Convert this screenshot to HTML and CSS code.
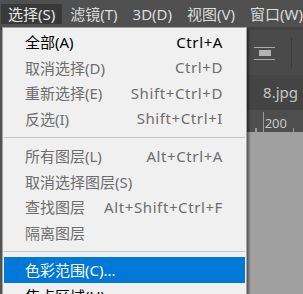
FILE: index.html
```html
<!DOCTYPE html>
<html lang="zh-CN">
<head>
    <meta charset="UTF-8">
    <meta name="viewport" content="width=device-width, initial-scale=1.0">
    <title>选择菜单</title>
    <link rel="stylesheet" href="styles.css">
</head>
<body>
    <div class="app">
        <nav class="menubar">
            <span class="open">选择(S)</span>
            <span>滤镜(T)</span>
            <span>3D(D)</span>
            <span>视图(V)</span>
            <span>窗口(W)</span>
        </nav>

        <div class="workspace">
            <div class="toolbox"></div>
            <div class="main">
                <div class="options">
                    <svg class="align-icon" width="21" height="13" viewBox="0 0 21 13">
                        <rect x="0" y="0" width="21" height="1" fill="#a9a9a9"/>
                        <rect x="5" y="3" width="12" height="6" fill="#b3b3b3"/>
                        <rect x="0" y="12" width="21" height="1" fill="#a9a9a9"/>
                    </svg>
                    <div class="divider"></div>
                </div>
                <div class="tabs">
                    <span class="tab">8.jpg</span>
                </div>
                <div class="ruler">
                    <span class="mark">200</span>
                </div>
                <div class="canvas"></div>
            </div>
        </div>

        <!-- 下拉菜单 -->
        <div class="dropdown">
            <div class="item on"><span>全部(A)</span><span class="key">Ctrl+A</span></div>
            <div class="item"><span>取消选择(D)</span><span class="key">Ctrl+D</span></div>
            <div class="item"><span>重新选择(E)</span><span class="key">Shift+Ctrl+D</span></div>
            <div class="item"><span>反选(I)</span><span class="key">Shift+Ctrl+I</span></div>
            <div class="sep"></div>
            <div class="item"><span>所有图层(L)</span><span class="key">Alt+Ctrl+A</span></div>
            <div class="item"><span>取消选择图层(S)</span></div>
            <div class="item"><span>查找图层</span><span class="key">Alt+Shift+Ctrl+F</span></div>
            <div class="item"><span>隔离图层</span></div>
            <div class="sep"></div>
            <div class="item active"><span>色彩范围(C)...</span></div>
            <div class="item on"><span>焦点区域(U)...</span></div>
        </div>
    </div>
</body>
</html>
```

FILE: styles.css
```css
body {
    margin: 0;
    font-family: "Noto Sans", "Noto Sans CJK SC", sans-serif;
    font-size: 15px;
    background-color: #535353;
}

.app {
    position: relative;
    width: 303px;
    height: 294px;
    overflow: hidden;
}

/* 顶部菜单栏 */
.menubar {
    display: flex;
    align-items: center;
    height: 27px;
    padding-left: 1px;
    background-color: #505050;
    white-space: nowrap;
}
.menubar span {
    padding: 0 7px;
    margin-right: 1px;
    line-height: 20px;
    color: #dcdcdc;
}
.menubar .open {
    background-color: #393939;
    color: #e8e8e8;
}

/* 工作区 */
.workspace {
    display: flex;
    height: 264px;
    border-top: 3px solid #424242;
}
.toolbox {
    width: 40px;
    background-color: #535353;
}
.main {
    flex-grow: 1;
    display: flex;
    flex-direction: column;
}

.options {
    height: 45px;
    display: flex;
    align-items: center;
    justify-content: flex-end;
    gap: 16px;
    padding-right: 11px;
    background-color: #4a4a4a;
}
.align-icon {
    margin-top: 2px;
}
.divider {
    width: 1px;
    height: 30px;
    background-color: #3a3a3a;
}

.tabs {
    height: 35px;
    display: flex;
    align-items: center;
    justify-content: flex-end;
    padding-right: 5px;
    background-color: #444;
}
.tab {
    color: #c4c4c4;
    font-size: 15px;
    padding-bottom: 2px;
}

.ruler {
    height: 22px;
    display: flex;
    align-items: flex-end;
    justify-content: flex-end;
    padding-right: 16px;
    background-color: #4e4e4e;
    background-image: repeating-linear-gradient(to right, #9a9a9a 0 1px, transparent 1px 12.5px);
    background-size: 100% 4px;
    background-position: 3px 100%;
    background-repeat: no-repeat;
}
.mark {
    height: 20px;
    padding-left: 1px;
    border-left: 1px solid #9a9a9a;
    color: #c8c8c8;
    font-size: 13px;
    line-height: 22px;
    background-color: #4e4e4e;
}

.canvas {
    flex-grow: 1;
    background-color: #a0a0a0;
}

/* 选择菜单 */
.dropdown {
    position: absolute;
    top: 27px;
    left: 2px;
    width: 241px;
    padding: 1px;
    border: 1px solid #a3a3a3;
    background-color: #f0f0f0;
    box-shadow: 2px 2px 2px rgba(0, 0, 0, 0.45);
}

.item {
    display: flex;
    align-items: center;
    justify-content: space-between;
    height: 25.5px;
    padding: 0 22px 0 21px;
    color: #6d6d6d;
    white-space: nowrap;
}
.item.on {
    color: #000;
}
.item.active {
    background-color: #0078d7;
    color: #fff;
}
.key {
    letter-spacing: 0.6px;
}

.sep {
    height: 12px;
    display: flex;
    align-items: center;
}
.sep::before {
    content: "";
    flex-grow: 1;
    height: 1px;
    background-color: #c3c3c3;
}
```
